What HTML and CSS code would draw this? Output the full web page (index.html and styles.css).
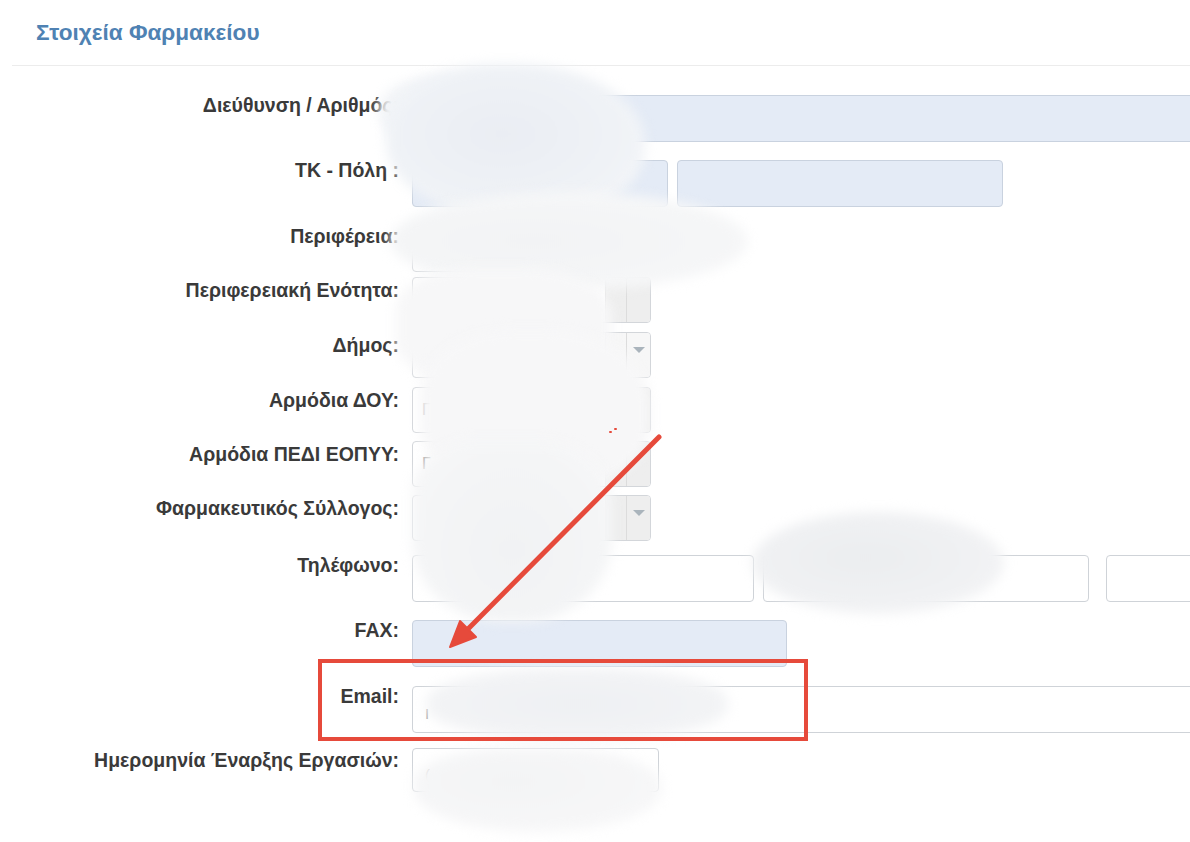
FILE: index.html
```html
<!DOCTYPE html>
<html lang="el">
<head>
<meta charset="utf-8">
<title>Στοιχεία Φαρμακείου</title>
<link rel="stylesheet" href="styles.css">
</head>
<body>
<div class="page">
  <div class="header"><h2 class="title">Στοιχεία Φαρμακείου</h2></div>
  <div class="form">
    <div class="lbl">Διεύθυνση / Αριθμός:</div>
    <div class="fields"><div class="inp ro w-full"></div></div>

    <div class="lbl">ΤΚ - Πόλη :</div>
    <div class="fields"><div class="inp ro w-tk"></div><div class="inp ro w-city"></div></div>

    <div class="lbl">Περιφέρεια:</div>
    <div class="fields"><div class="sel w-sel"><span class="sel-text"></span><span class="sel-clear"></span><span class="sel-arrow"></span></div></div>

    <div class="lbl lbl-sel">Περιφερειακή Ενότητα:</div>
    <div class="fields"><div class="sel w-sel"><span class="sel-text"></span><span class="sel-clear"></span><span class="sel-arrow"></span></div></div>

    <div class="lbl lbl-sel">Δήμος:</div>
    <div class="fields"><div class="sel w-sel white"><span class="sel-text"></span><span class="sel-clear"></span><span class="sel-arrow"><i class="tri"></i></span></div></div>

    <div class="lbl lbl-sel">Αρμόδια ΔΟΥ:</div>
    <div class="fields"><div class="sel w-sel"><span class="sel-text">Γ</span><span class="sel-clear"></span><span class="sel-arrow"></span></div></div>

    <div class="lbl lbl-sel">Αρμόδια ΠΕΔΙ ΕΟΠΥΥ:</div>
    <div class="fields"><div class="sel w-sel"><span class="sel-text">Γ</span><span class="sel-clear"></span><span class="sel-arrow"></span></div></div>

    <div class="lbl lbl-sel">Φαρμακευτικός Σύλλογος:</div>
    <div class="fields"><div class="sel w-sel"><span class="sel-text"></span><span class="sel-clear"></span><span class="sel-arrow"><i class="tri"></i></span></div></div>

    <div class="lbl">Τηλέφωνο:</div>
    <div class="fields gap-tel"><div class="inp w-tel1"></div><div class="inp w-tel2"></div><div class="inp w-tel3"></div></div>

    <div class="lbl">FAX:</div>
    <div class="fields"><div class="inp ro w-fax"></div></div>

    <div class="lbl">Email:</div>
    <div class="fields"><div class="inp w-full"><span class="inp-text">I</span></div></div>

    <div class="lbl lbl-date">Ημερομηνία Έναρξης Εργασιών:</div>
    <div class="fields"><div class="inp w-date"><span class="inp-text">(</span></div></div>
  </div>

  <div class="blob blob-a0"></div>
  <div class="blob blob-a"></div>
  <div class="blob blob-b"></div>
  <div class="blob blob-c1"></div>
  <div class="blob blob-c2"></div>
  <div class="blob blob-c3"></div>
  <div class="blob blob-d"></div>
  <div class="blob blob-e"></div>
  <div class="blob blob-f"></div>
  <span class="dot dot1"></span><span class="dot dot2"></span>

  <div class="highlight"></div>
  <svg class="arrow" width="1190" height="842" viewBox="0 0 1190 842">
    <line x1="659" y1="437" x2="468" y2="629" stroke="#e64a3b" stroke-width="5" stroke-linecap="round"/>
    <polygon points="450,647 476,637 460,621" fill="#e64a3b" stroke="#e64a3b" stroke-width="2" stroke-linejoin="round"/>
  </svg>
</div>
</body>
</html>
```

FILE: styles.css
```css
html, body {
  margin: 0;
  padding: 0;
  background: #ffffff;
}
body {
  width: 1190px;
  height: 842px;
  overflow: hidden;
  font-family: "Liberation Sans", Arial, sans-serif;
}
.page {
  position: relative;
  width: 1190px;
  height: 842px;
  overflow: hidden;
}
.header {
  margin-left: 12px;
  height: 66px;
  box-sizing: border-box;
  border-bottom: 1px solid #ececec;
}
.title {
  margin: 0;
  padding-left: 24px;
  line-height: 65px;
  font-size: 22.6px;
  font-weight: bold;
  color: #4f82b3;
}
.form {
  display: grid;
  grid-template-columns: 399px 1fr;
  column-gap: 13px;
  grid-template-rows: 65px 66px 51px 55px 55px 54px 54px 60px 65px 66px 62px 50px;
  padding-top: 29px;
}
.lbl {
  text-align: right;
  font-size: 19.5px;
  line-height: 20px;
  font-weight: bold;
  color: #3a3a3a;
  padding-top: 0;
  white-space: nowrap;
}
.lbl-sel { padding-top: 3px; }
.lbl-date { padding-top: 2px; }
.fields {
  display: flex;
  gap: 9px;
  align-items: flex-start;
  min-width: 0;
}
.gap-tel { gap: 9px; }
.inp {
  box-sizing: border-box;
  height: 47px;
  border: 1px solid #cfd3d8;
  border-radius: 4px;
  background: #fff;
  flex: none;
  display: flex;
  align-items: center;
  padding-left: 12px;
}
.inp.ro {
  background: #e4ebf6;
  border-color: #c9d2df;
}
.inp-text {
  color: #aaa;
  font-size: 15px;
  margin-top: 8px;
}
.w-full { width: 820px; }
.w-tk { width: 256px; }
.w-city { width: 326px; }
.w-sel { width: 239px; }
.w-tel1 { width: 342px; }
.w-tel2 { width: 326px; margin-right: 8px; }
.w-tel3 { width: 200px; }
.w-fax { width: 375px; }
.w-date { width: 247px; height: 44px; }
.sel {
  box-sizing: border-box;
  height: 46px;
  border: 1px solid #d3d6da;
  border-radius: 4px;
  background: #fff;
  display: flex;
  overflow: hidden;
  flex: none;
}
.sel-text {
  flex: 1;
  padding-left: 9px;
  display: flex;
  align-items: center;
  color: #999;
  font-size: 16px;
}
.sel-clear {
  width: 20px;
  background: #eeeeee;
  border-left: 1px solid #e2e2e2;
}
.sel-arrow {
  width: 24px;
  background: #eeeeee;
  border-left: 1px solid #dcdcdc;
  display: flex;
  justify-content: center;
  padding-top: 14px;
  box-sizing: border-box;
}
.sel.white .sel-clear, .sel.white .sel-arrow { background: #f7f7f7; }
.tri {
  width: 0;
  height: 0;
  border-left: 6px solid transparent;
  border-right: 6px solid transparent;
  border-top: 6px solid #aab4bc;
}
.blob {
  position: absolute;
  border-radius: 50%;
  filter: blur(6px);
}
.blob-a0 {
  left: 378px; top: 76px; width: 120px; height: 70px;
  background: #f3f5f8;
  border-radius: 50%;
}
.blob-a {
  left: 386px; top: 64px; width: 259px; height: 156px;
  background: radial-gradient(ellipse at 45% 45%, #eaedf3 0%, #eff2f6 55%, #f6f7f9 100%);
  border-radius: 42% 50% 45% 50%;
}
.blob-b {
  left: 390px; top: 192px; width: 358px; height: 98px;
  background: radial-gradient(ellipse at 40% 50%, #f2f3f5 0%, #f5f6f7 60%, #f9f9fa 100%);
}
.blob-c1 {
  left: 396px; top: 268px; width: 216px; height: 120px;
  background: #f7f7f8;
  border-radius: 35% 40% 40% 40%;
}
.blob-c2 {
  left: 420px; top: 330px; width: 230px; height: 160px;
  background: #f7f7f8;
  border-radius: 40% 45% 40% 40%;
}
.blob-c3 {
  left: 412px; top: 440px; width: 200px; height: 182px;
  background: radial-gradient(ellipse at 50% 60%, #f1f2f4 0%, #f4f5f6 60%, #f8f8f9 100%);
  border-radius: 30% 35% 45% 45%;
}
.blob-d {
  left: 752px; top: 512px; width: 252px; height: 102px;
  background: radial-gradient(ellipse at 45% 45%, #ebedef 0%, #f0f1f3 55%, #f7f7f8 100%);
}
.blob-e {
  left: 426px; top: 668px; width: 302px; height: 72px;
  background: radial-gradient(ellipse at 50% 50%, #eef0f3 0%, #f2f3f5 60%, #f7f8f9 100%);
  border-radius: 45%;
}
.blob-f {
  left: 414px; top: 748px; width: 248px; height: 84px;
  background: radial-gradient(ellipse at 40% 40%, #f3f4f5 0%, #f7f7f8 70%, #fbfbfb 100%);
  border-radius: 40% 45% 50% 50%;
}
.dot {
  position: absolute;
  width: 3px;
  height: 2px;
  background: #e64a3b;
  border-radius: 1px;
}
.dot1 { left: 609px; top: 431px; }
.dot2 { left: 614px; top: 428px; }
.highlight {
  position: absolute;
  left: 318px;
  top: 659px;
  width: 490px;
  height: 82px;
  box-sizing: border-box;
  border: 4px solid #e64a3b;
}
.arrow {
  position: absolute;
  left: 0;
  top: 0;
}
```
